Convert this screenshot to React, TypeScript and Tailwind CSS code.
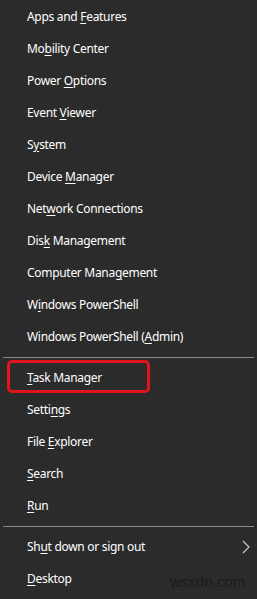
import React from "react"

type Item = { pre: string; key: string; post: string; arrow?: boolean; highlight?: boolean }

const groups: Item[][] = [
	[
		{ pre: "Apps and ", key: "F", post: "eatures" },
		{ pre: "Mo", key: "b", post: "ility Center" },
		{ pre: "Power ", key: "O", post: "ptions" },
		{ pre: "Event ", key: "V", post: "iewer" },
		{ pre: "S", key: "y", post: "stem" },
		{ pre: "Device ", key: "M", post: "anager" },
		{ pre: "Net", key: "w", post: "ork Connections" },
		{ pre: "Dis", key: "k", post: " Management" },
		{ pre: "Computer Mana", key: "g", post: "ement" },
		{ pre: "W", key: "i", post: "ndows PowerShell" },
		{ pre: "Windows PowerShell (", key: "A", post: "dmin)" },
	],
	[
		{ pre: "", key: "T", post: "ask Manager", highlight: true },
		{ pre: "Setti", key: "n", post: "gs" },
		{ pre: "File ", key: "E", post: "xplorer" },
		{ pre: "", key: "S", post: "earch" },
		{ pre: "", key: "R", post: "un" },
	],
	[
		{ pre: "Sh", key: "u", post: "t down or sign out", arrow: true },
		{ pre: "", key: "D", post: "esktop" },
	],
]

function MenuRow({ item }: { item: Item }) {
	return (
		<div className="relative flex h-8 items-center pl-[27px] pr-[7px]">
			<span className="flex-1 whitespace-nowrap tracking-[-0.3px]">
				{item.pre}
				<u className="underline-offset-[2px]">{item.key}</u>
				{item.post}
			</span>
			{item.arrow && (
				<svg width="8" height="14" viewBox="0 0 8 14" className="text-[#d0d0d0]">
					<polyline points="1,1 7,7 1,13" fill="none" stroke="currentColor" strokeWidth="1.1" />
				</svg>
			)}
			{/* red callout box drawn over the row */}
			{item.highlight && (
				<div className="pointer-events-none absolute left-[7px] top-[-2px] h-[33px] w-[143px] rounded-[5px] border-[3px] border-[#e3141b]" />
			)}
		</div>
	)
}

export default function App() {
	return (
		<div
			className="relative h-[599px] w-[257px] overflow-hidden bg-[#2b2b2b] pt-[1px] text-[12px] text-white"
			style={{ fontFamily: '"Segoe UI", "Noto Sans", "Open Sans", sans-serif' }}
		>
			{groups.map((g, gi) => (
				<div key={gi}>
					{gi > 0 && <div className="mx-[3px] my-[4px] h-px bg-[#8a8a8a]" />}
					{g.map((item, i) => (
						<MenuRow key={i} item={item} />
					))}
				</div>
			))}
			{/* watermark */}
			<div
				className="absolute bottom-[6px] right-[12px] text-[15px] text-[#1c1c1c]"
				style={{ fontFamily: '"Liberation Sans", Arial, sans-serif' }}
			>
				wsxdn.com
			</div>
		</div>
	)
}
